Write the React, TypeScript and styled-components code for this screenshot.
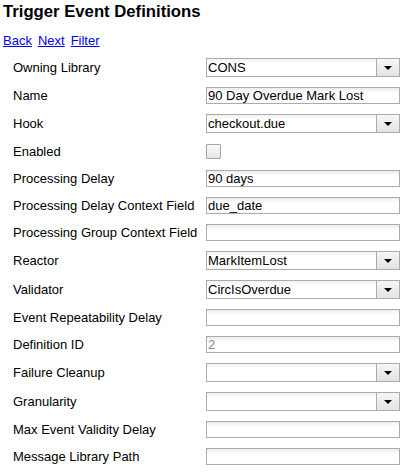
import React from "react"
import styled, { createGlobalStyle } from "styled-components"

type FieldKind = "select" | "text" | "check" | "disabled"

interface Field {
  label: string
  kind: FieldKind
  value?: string
}

const fields: Field[] = [
  { label: "Owning Library", kind: "select", value: "CONS" },
  { label: "Name", kind: "text", value: "90 Day Overdue Mark Lost" },
  { label: "Hook", kind: "select", value: "checkout.due" },
  { label: "Enabled", kind: "check" },
  { label: "Processing Delay", kind: "text", value: "90 days" },
  { label: "Processing Delay Context Field", kind: "text", value: "due_date" },
  { label: "Processing Group Context Field", kind: "text", value: "" },
  { label: "Reactor", kind: "select", value: "MarkItemLost" },
  { label: "Validator", kind: "select", value: "CircIsOverdue" },
  { label: "Event Repeatability Delay", kind: "text", value: "" },
  { label: "Definition ID", kind: "disabled", value: "2" },
  { label: "Failure Cleanup", kind: "select", value: "" },
  { label: "Granularity", kind: "select", value: "" },
  { label: "Max Event Validity Delay", kind: "text", value: "" },
  { label: "Message Library Path", kind: "text", value: "" },
]

const GlobalStyle = createGlobalStyle`
  html, body {
    margin: 0;
    padding: 0;
    background: #fff;
  }
  body {
    font-family: "Liberation Sans", Arial, sans-serif;
    font-size: 13px;
    color: #000;
  }
`

const Page = styled.div`
  padding: 2px 3px 0 3px;
`

const Title = styled.h1`
  margin: 0;
  font-size: 16.7px;
  font-weight: bold;
  line-height: 19px;
`

const NavBar = styled.div`
  display: flex;
  gap: 6px;
  margin-top: 12px;
  line-height: 15px;
`

const NavLink = styled.a`
  color: #0000ee;
  text-decoration: underline;
  cursor: pointer;
`

const Form = styled.div`
  display: grid;
  grid-template-columns: 193px 194px;
  padding-left: 10px;
  margin-top: 5px;
`

const Row = styled.div<{ $tall: boolean }>`
  display: contents;

  & > * {
    height: ${(p) => (p.$tall ? 29 : 27)}px;
  }
`

const Label = styled.div`
  display: flex;
  align-items: center;
  color: #000;
  white-space: nowrap;
`

const Cell = styled.div`
  display: flex;
  align-items: center;
`

const TextInput = styled.input`
  box-sizing: border-box;
  width: 194px;
  height: 17px;
  margin: 0;
  padding: 0 1px;
  border: 1px solid #ababab;
  border-radius: 0;
  background: linear-gradient(to bottom, #ececec 0, #ffffff 5px);
  font-family: "Liberation Sans", Arial, sans-serif;
  font-size: 13px;
  color: #000;
  outline: none;

  &:disabled {
    color: #8a8a8a;
  }
`

const SelectBox = styled.div`
  box-sizing: border-box;
  display: flex;
  width: 194px;
  height: 19px;
  border: 1px solid #ababab;
  background: #fff;
`

const SelectValue = styled.div`
  flex: 1;
  padding-left: 1px;
  line-height: 17px;
  white-space: nowrap;
  overflow: hidden;
  background: linear-gradient(to bottom, #f2f2f2 0, #ffffff 5px);
`

const ArrowBox = styled.div`
  width: 22px;
  border-left: 1px solid #ababab;
  display: flex;
  align-items: center;
  justify-content: center;
  background: linear-gradient(to bottom, #f6f6f6, #e3e3e3);
`

const Arrow = styled.span`
  width: 0;
  height: 0;
  border-left: 4px solid transparent;
  border-right: 4px solid transparent;
  border-top: 4px solid #000;
  margin-top: 1px;
`

const CheckBox = styled.input`
  appearance: none;
  box-sizing: border-box;
  width: 15px;
  height: 15px;
  margin: 0;
  border: 1px solid #a6a6a6;
  border-radius: 1px;
  background: linear-gradient(to bottom, #fbfbfb, #e4e4e4);
`

const FieldControl = ({ field }: { field: Field }) => {
  switch (field.kind) {
    case "select":
      return (
        <SelectBox>
          <SelectValue>{field.value}</SelectValue>
          <ArrowBox>
            <Arrow />
          </ArrowBox>
        </SelectBox>
      )
    case "check":
      return <CheckBox type="checkbox" />
    case "disabled":
      return <TextInput type="text" defaultValue={field.value} disabled />
    default:
      return <TextInput type="text" defaultValue={field.value} readOnly />
  }
}

const App = () => {
  return (
    <Page>
      <GlobalStyle />
      <Title>Trigger Event Definitions</Title>
      <NavBar>
        <NavLink>Back</NavLink>
        <NavLink>Next</NavLink>
        <NavLink>Filter</NavLink>
      </NavBar>
      <Form>
        {fields.map((f) => (
          <Row key={f.label} $tall={f.kind === "select"}>
            <Label>{f.label}</Label>
            <Cell>
              <FieldControl field={f} />
            </Cell>
          </Row>
        ))}
      </Form>
    </Page>
  )
}

export default App
